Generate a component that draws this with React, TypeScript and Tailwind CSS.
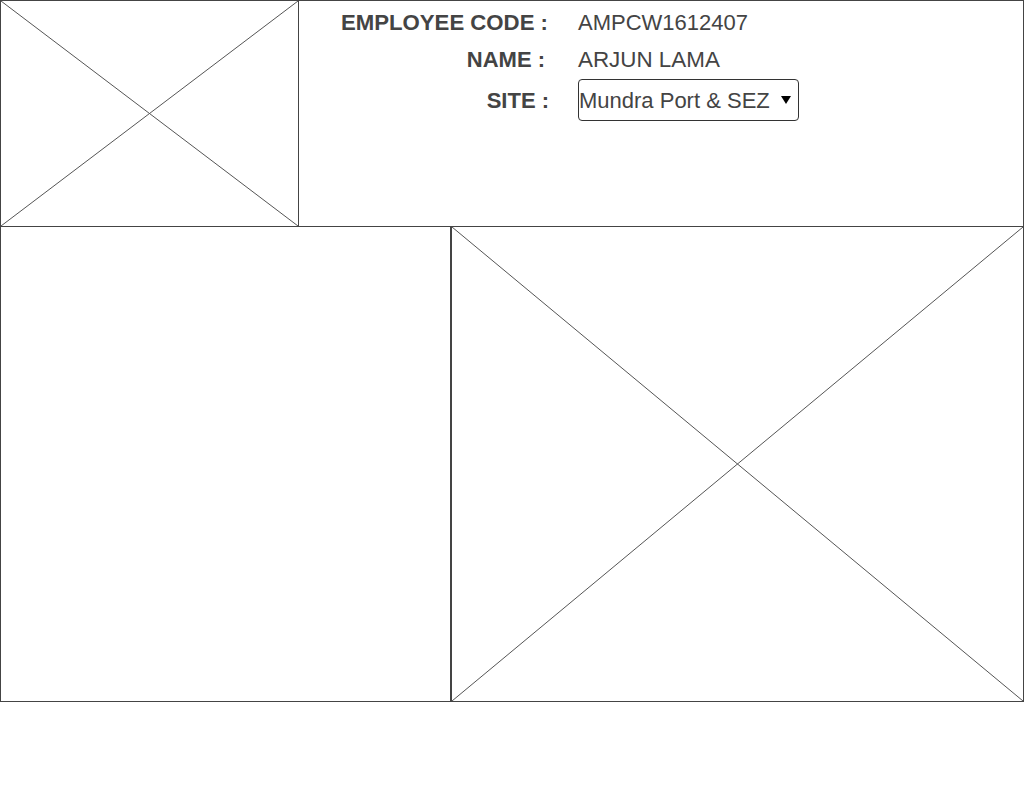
import React from 'react'

const Placeholder: React.FC<{ className?: string }> = ({ className }) => (
  <div className={`border border-[#444] bg-white ${className ?? ''}`}>
    <svg className="block w-full h-full" viewBox="0 0 100 100" preserveAspectRatio="none">
      <line x1="0" y1="0" x2="100" y2="100" stroke="#555" strokeWidth="1" vectorEffect="non-scaling-stroke" />
      <line x1="100" y1="0" x2="0" y2="100" stroke="#555" strokeWidth="1" vectorEffect="non-scaling-stroke" />
    </svg>
  </div>
)

const App: React.FC = () => {
  return (
    <div className="w-[1024px] h-[804px] bg-white text-[#444] font-['Liberation_Sans',Arial,sans-serif]">
      <div className="flex h-[227px]">
        <Placeholder className="w-[299px] h-[227px] shrink-0" />
        <div className="flex-1 border-t border-b border-r border-[#444] text-[22px]">
          <div className="flex items-center h-[25px] mt-[9px]">
            <div className="w-[249px] text-right font-bold text-[22.2px]">EMPLOYEE CODE :</div>
            <div className="ml-[30px]">AMPCW1612407</div>
          </div>
          <div className="flex items-center h-[25px] mt-[12px]">
            <div className="w-[246px] text-right font-bold">NAME :</div>
            <div className="ml-[33px] text-[22.4px]">ARJUN LAMA</div>
          </div>
          <div className="flex items-center h-[42px] mt-[7px]">
            <div className="w-[250px] text-right font-bold">SITE :</div>
            <div className="ml-[29px] w-[221px] h-[42px] border border-[#333] rounded-[4px] flex items-center justify-between pr-[7px]">
              <span>Mundra Port &amp; SEZ</span>
              <svg width="10" height="8" viewBox="0 0 10 8">
                <polygon points="0,0 10,0 5,8" fill="#000" />
              </svg>
            </div>
          </div>
        </div>
      </div>
      <div className="flex -mt-px">
        <div className="w-[451px] h-[476px] shrink-0 border border-[#444]" />
        <Placeholder className="w-[573px] h-[476px] shrink-0" />
      </div>
    </div>
  )
}

export default App
